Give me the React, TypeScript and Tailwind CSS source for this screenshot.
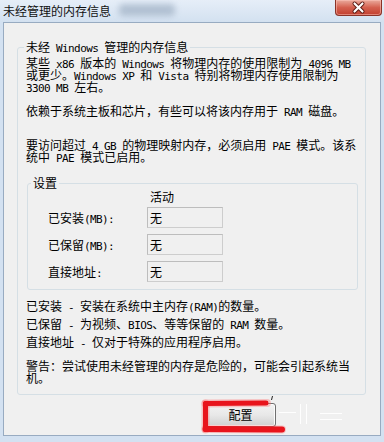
import React from "react";

function T({ s }: { s: string }) {
  const parts = s.split(/([\x20-\x7e]+)/);
  return (
    <>
      {parts.map((p, i) =>
        i % 2 === 1 ? (
          <span key={i} className="font-['DejaVu_Sans_Mono'] text-[11px] leading-[10px] tracking-[-0.6px]">
            {p}
          </span>
        ) : (
          <React.Fragment key={i}>{p}</React.Fragment>
        )
      )}
    </>
  );
}

function Line({ s, cls = "" }: { s: string; cls?: string }) {
  return (
    <div className={"h-[12px] leading-[12px] whitespace-pre " + cls}>
      <T s={s} />
    </div>
  );
}

function Row({ label, cls }: { label: string; cls: string }) {
  return (
    <div className={"flex items-center h-[21px] " + cls}>
      <div className="w-[99px] h-[12px] leading-[12px] whitespace-pre">
        <T s={label} />
      </div>
      <div className="w-[76px] h-[21px] border border-[#cdcdcd] border-t-[#bdbdbd] border-l-[#bdbdbd] bg-[#f0f0f0] pl-[2px] flex items-center">
        无
      </div>
    </div>
  );
}

export default function App() {
  return (
    <div className="relative w-[384px] h-[442px] overflow-hidden bg-[#d3e1f1] font-['Noto_Sans_CJK_SC'] text-[12px] leading-[12px] text-black">
      {/* title bar */}
      <div className="h-[22px] flex items-start pl-[3px] pt-[5px] bg-linear-to-b from-[#e6eef8] to-[#d3e1f0]">
        <span className="h-[12px] leading-[12px] text-[#111]">未经管理的内存信息</span>
        <span className="ml-[8px] -mt-[1px] w-[56px] h-[12px] rounded bg-[#9fb0c4] blur-[3px] opacity-70" />
      </div>
      {/* close button */}
      <div className="absolute top-0 right-[2px] w-[47px] h-[16px] rounded-b-[4px] border border-t-0 border-[#8a3328] bg-linear-to-b from-[#e9aa9d] via-[#d4604f] to-[#c23f2f] shadow-[inset_0_0_0_1px_rgba(255,200,190,0.5)]">
        <svg width="45" height="15" viewBox="0 0 45 15" className="block">
          <path d="M18.5 3.5 L26.5 11.5 M26.5 3.5 L18.5 11.5" stroke="#5b1a12" strokeWidth="4" strokeLinecap="round" />
          <path d="M18.5 3.5 L26.5 11.5 M26.5 3.5 L18.5 11.5" stroke="#ffffff" strokeWidth="2.2" strokeLinecap="round" />
        </svg>
      </div>

      {/* client area */}
      <div className="mx-[3px] h-[414px] border border-[#98abc1] bg-[#f0f0f0] flex flex-col">
        <fieldset className="mt-[18px] ml-[13px] mr-[14px] border border-[#d5dfe5] rounded-[3px] pl-[6px] pr-[6px] pt-[4px] pb-[10px]">
          <legend className="px-[2px] h-[12px] leading-[12px] whitespace-pre">
            <T s="未经 Windows 管理的内存信息" />
          </legend>
          <div className="pl-[2px]">
            <Line s="某些 x86 版本的 Windows 将物理内存的使用限制为 4096 MB" />
            <Line s="或更少。Windows XP 和 Vista 特别将物理内存使用限制为" />
            <Line s="3300 MB 左右。" />
            <Line s="依赖于系统主板和芯片，有些可以将该内存用于 RAM 磁盘。" cls="mt-[12px]" />
            <Line s="要访问超过 4 GB 的物理映射内存，必须启用 PAE 模式。该系" cls="mt-[22px]" />
            <Line s="统中 PAE 模式已启用。" />
          </div>

          <fieldset className="ml-[3px] mr-[1px] mt-[14px] border border-[#d5dfe5] rounded-[3px] pl-[3px] pt-[2px] pb-[7px]">
            <legend className="px-[2px] h-[12px] leading-[12px]">设置</legend>
            <div className="pl-[17px]">
              <div className="pl-[102px] h-[12px] leading-[12px]">活动</div>
              <Row label="已安装(MB):" cls="mt-[4px]" />
              <Row label="已保留(MB):" cls="mt-[6px]" />
              <Row label="直接地址:" cls="mt-[6px]" />
            </div>
          </fieldset>

          <div className="pl-[2px]">
            <Line s="已安装 - 安装在系统中主内存(RAM)的数量。" cls="mt-[10px]" />
            <Line s="已保留 - 为视频、BIOS、等等保留的 RAM 数量。" cls="mt-[6px]" />
            <Line s="直接地址 - 仅对于特殊的应用程序启用。" cls="mt-[6px]" />
            <Line s="警告：尝试使用未经管理的内存是危险的，可能会引起系统当" cls="mt-[12px]" />
            <Line s="机。" />
          </div>
        </fieldset>

        <div className="mt-[8px] pl-[201px] flex">
          <button className="w-[71px] h-[24px] rounded-[3px] border border-[#707070] bg-linear-to-b from-[#f3f3f3] via-[#e8e8e8] to-[#d0d0d0] shadow-[inset_0_0_0_1px_#fcfcfc] flex items-center justify-center text-[12px] leading-[12px]">
            配置
          </button>
        </div>
      </div>

      {/* red annotation overlay */}
      <svg
        className="absolute left-0 top-0 pointer-events-none"
        width="384"
        height="442"
        viewBox="0 0 384 442"
      >
        <g stroke="#ff6b6b" strokeOpacity="0.35" strokeWidth="8" strokeLinecap="round" fill="none">
          <path d="M205.5 403.5 L267 403" />
          <path d="M205.5 403.5 L205.5 429.5" />
          <path d="M205.5 429 L282 429.5" />
        </g>
        <g stroke="#e8141c" strokeLinecap="round" fill="none">
          <path d="M205.5 403.5 L266 403" strokeWidth="5" />
          <path d="M205.5 403.5 L205.5 429.5" strokeWidth="5" />
          <path d="M205.5 429 L282 429.5" strokeWidth="6" />
        </g>
        <path d="M272 396 L273 396 L272 400 L271 400 Z" fill="#222" />
        <g stroke="#ffffff" strokeWidth="1" strokeOpacity="0.9" fill="none">
          <path d="M279 412.5 L296 412.5" />
          <path d="M300.5 404 L300.5 424" />
          <path d="M306.5 404 L306.5 424" />
          <path d="M320 413.5 L342 413.5" />
          <path d="M320 419.5 L342 419.5" />
        </g>
      </svg>
    </div>
  );
}
